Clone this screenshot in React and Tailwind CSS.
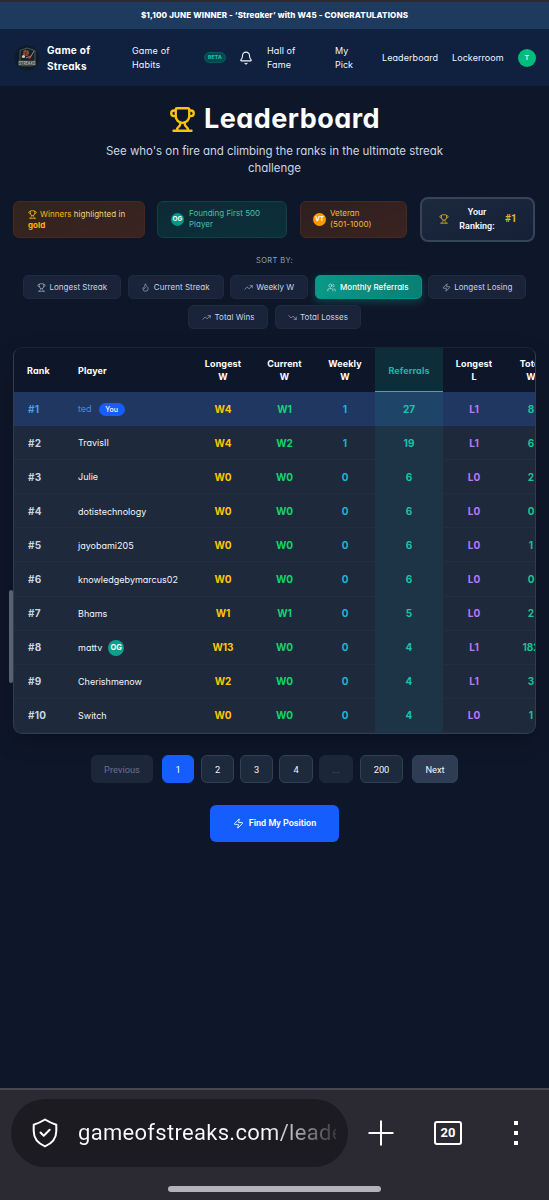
import React from "react";
import { Trophy, Flame, TrendingUp, TrendingDown, Users, Zap, Bell } from "lucide-react";

const players = [
  ["ted", "W4", "W1", 1, 27, "L1", "8"],
  ["TravisII", "W4", "W2", 1, 19, "L1", "6"],
  ["Julie", "W0", "W0", 0, 6, "L0", "2"],
  ["dotistechnology", "W0", "W0", 0, 6, "L0", "0"],
  ["jayobami205", "W0", "W0", 0, 6, "L0", "1"],
  ["knowledgebymarcus02", "W0", "W0", 0, 6, "L0", "0"],
  ["Bhams", "W1", "W1", 0, 5, "L0", "2"],
  ["mattv", "W13", "W0", 0, 4, "L1", "182"],
  ["Cherishmenow", "W2", "W0", 0, 4, "L1", "3"],
  ["Switch", "W0", "W0", 0, 4, "L0", "1"],
];

function Banner() {
  return (
    <div className="h-[29px] shrink-0 border-t-2 border-[#2b2a33] bg-[#1e3a5f] text-center text-[8px] leading-[27px] font-extrabold tracking-[0.14px] text-white">
      $1,100 JUNE WINNER - ‘Streaker’ with W45 - CONGRATULATIONS
    </div>
  );
}

function Logo() {
  return (
    <svg viewBox="0 0 26 26" className="size-[26px] shrink-0">
      <circle cx="13" cy="13" r="12.5" fill="#0e1c29" />
      <path d="M6 5.500 13 3l8 2.500v9l-3 5H9l-3-5z" fill="#14212a" stroke="#5d665f" strokeWidth=".8" />
      <circle cx="12" cy="8" r="3" fill="#9b4a2c" />
      <path d="m9 7 6 3M13 5l-2 6" stroke="#312a2a" strokeWidth=".6" />
      <circle cx="9.500" cy="11.500" r="1.600" fill="#c9cbc5" />
      <path d="m20 6-4 7M12 13l5-2" stroke="#8e9791" strokeWidth=".9" />
      <circle cx="15.500" cy="12.500" r="1.300" fill="#a8443d" />
      <path d="M4 15.500h18v5l-4 1H8l-4-1z" fill="#39413f" />
      <text x="13" y="20" textAnchor="middle" textLength="16.500" lengthAdjust="spacingAndGlyphs" fontSize="5" fontWeight="700" fill="#a9ada5" fontFamily="Inter">STREAKS</text>
    </svg>
  );
}

function Header() {
  return (
    <header className="flex h-[57px] shrink-0 items-center bg-[#10203f] pr-[13px] pl-[14px] text-[9px] leading-[14px] whitespace-nowrap text-slate-100">
      <Logo />
      <div className="ml-[7px] w-[85px] text-[10px] leading-4 font-bold tracking-[0.3px] text-white">Game of<br />Streaks</div>
      <div className="w-[72px] tracking-[0.15px]">Game of<br />Habits</div>
      <div className="h-[11px] w-[22px] rounded-full border border-teal-800 bg-[#0b464f] text-center text-[5px] leading-[9px] font-bold tracking-[0.3px] text-teal-400">BETA</div>
      <Bell className="ml-[13px] size-[14px]" strokeWidth={1.9} />
      <div className="ml-[14px] w-[68px] tracking-[0.1px]">Hall of<br />Fame</div>
      <div className="w-[47px]">My<br />Pick</div>
      <div className="w-[70px] tracking-[0.08px]">Leaderboard</div>
      <div className="tracking-[0.07px]">Lockerroom</div>
      <div className="ml-auto size-[18px] rounded-full bg-emerald-500 text-center font-['Roboto',sans-serif] text-[7px] leading-[18px] font-medium">T</div>
    </header>
  );
}

function Badge({ className, children }) {
  return (
    <span className={"inline-flex shrink-0 items-center justify-center rounded-full font-bold text-white " + className}>{children}</span>
  );
}

function Legend() {
  return (
    <div className="mt-[20px] flex h-[46px] w-[523px] shrink-0 items-center self-center text-[8px] leading-[11px] whitespace-nowrap">
      <div className="h-[37px] w-[132px] rounded-md border border-[#46291f] bg-linear-to-br from-[#30241f] to-[#3b2320] px-[14px] pt-[7px] text-amber-400">
        <div className="flex items-center gap-[3px]"><Trophy className="size-[9px]" /><span className="tracking-[0.04px]">Winners <span className="text-[#f5d479]">highlighted in</span></span></div>
        <div className="font-bold">gold</div>
      </div>
      <div className="ml-[12px] flex h-[37px] w-[130px] items-center rounded-md border border-[#10423f] bg-linear-to-br from-[#0d2a35] to-[#0b3039] pl-[13px] text-[#3cc4ab]">
        <Badge className="mr-[5px] size-[13px] bg-teal-600 text-[6.500px]">OG</Badge>
        <div>Founding First 500<br />Player</div>
      </div>
      <div className="ml-[13px] flex h-[37px] w-[107px] items-center rounded-md border border-[#46291f] bg-linear-to-br from-[#2c201f] to-[#3b2320] pl-[12px] text-[#f0bd3c]">
        <Badge className="mr-[4px] size-[13px] bg-amber-500 text-[6.500px]">VT</Badge>
        <div>Veteran<br /><span className="tracking-[0.05px]">(501-1000)</span></div>
      </div>
      <div className="ml-[13px] flex h-[45px] w-[115px] items-center rounded-lg border-2 border-[#36445b] bg-linear-to-br from-slate-800 to-[#152037] pl-[17px] font-['Roboto',sans-serif] text-[9px] leading-[14px] font-semibold text-slate-50">
        <Trophy className="size-[10px] text-[#cba126]" strokeWidth={2.2} />
        <div className="mr-[10px] ml-[10px] w-[36px] text-center">Your<br />Ranking:</div>
        <span className="text-[10px] font-bold text-[#e6b52b]">#1</span>
      </div>
    </div>
  );
}

const sorts = [
  [Trophy, "Longest Streak", "w-[98px]"],
  [Flame, "Current Streak", "w-[96px]"],
  [TrendingUp, "Weekly W", "w-[78px]"],
  [Users, "Monthly Referrals", "w-[107px]"],
  [Zap, "Longest Losing", "w-[98px]"],
  [TrendingUp, "Total Wins", "w-[80px]"],
  [TrendingDown, "Total Losses", "w-[86px]"],
];

function SortBar() {
  return (
    <>
      <div className="mt-[13px] h-[12px] shrink-0 text-center text-[7.500px] leading-[12px] tracking-[0.35px] text-slate-400">SORT BY:</div>
      <div className="mt-[8px] flex shrink-0 flex-wrap justify-center gap-x-[6.500px] gap-y-[6px] px-3">
        {sorts.map(([Icon, label, width], i) => (
          <button
            key={label}
            className={
              "flex h-6 items-center justify-center gap-[3.500px] rounded-[5px] border text-[8px] tracking-[0.03px] whitespace-nowrap " + width +
              (i === 3
                ? " border-teal-600 bg-linear-to-r from-[#0b9986] to-[#087f75] font-medium text-white shadow-[0_3px_8px_rgba(13,148,136,0.35)]"
                : " border-[#1e2a3e] bg-[#19243a] text-slate-300")
            }
          >
            <Icon className="size-[9px] shrink-0 opacity-80" strokeWidth={1.8} />
            <span>{label}</span>
          </button>
        ))}
      </div>
    </>
  );
}

function Board() {
  return (
    <div className="mt-[18px] h-[387px] w-[523px] shrink-0 self-center overflow-hidden rounded-[9px] border border-[#303d50] border-t-[#18253a] bg-[#1e293b] shadow-[0_8px_20px_rgba(3,7,18,0.3)]">
      <table className="h-[385px] w-[543px] table-fixed border-collapse text-center text-[10px] font-bold">
        <colgroup>
          <col className="w-[50px]" />
          <col className="w-[128px]" />
          <col className="w-[62px]" />
          <col className="w-[61px]" />
          <col className="w-[60px]" />
          <col className="w-[68px]" />
          <col className="w-[62px]" />
          <col className="w-[52px]" />
        </colgroup>
        <thead>
          <tr className="h-11 bg-[#0e172a] text-[9px] leading-[13px] tracking-[0.1px] text-white">
            <th className="pl-[13px] text-left">Rank</th>
            <th className="pl-[14px] text-left">Player</th>
            <th>Longest<br />W</th>
            <th>Current<br />W</th>
            <th>Weekly<br />W</th>
            <th className="bg-[#0e2d3b] text-[#14b8a6] shadow-[inset_0_-1px_0_#20b8a8]">Referrals</th>
            <th>Longest<br />L</th>
            <th>Total<br />W</th>
          </tr>
        </thead>
        <tbody>
          {players.map(([name, longest, current, weekly, referrals, loss, total], i) => (
            <tr key={name} className={"h-[34.100px] " + (i === 0 ? "bg-[#203861]" : "shadow-[inset_0_-1px_0_#222f43]")}>
              <td className={"p-0 pl-[14px] text-left tracking-[0.25px] " + (i === 0 ? "text-[#4f9bf4]" : "text-slate-300")}>#{i + 1}</td>
              <td className={"p-0 pl-[14px] text-left text-[9px] font-normal " + (i === 0 ? "text-[#4a88d8]" : "text-slate-100")}>
                <div className="flex items-center">
                  {name}
                  {i === 0 && <span className="ml-[7px] h-[13px] w-[26px] rounded-full bg-[#155dfc] text-center text-[7px] leading-[13px] font-medium text-white">You</span>}
                  {i === 7 && <Badge className="ml-[6px] size-4 bg-[#0d9f8c] text-[7.500px]">OG</Badge>}
                </div>
              </td>
              <td className="p-0 text-[#fcc800]">{longest}</td>
              <td className="p-0 text-[#14d66c]">{current}</td>
              <td className="p-0 text-[#18b6dc]">{weekly}</td>
              <td className={"p-0 text-[#17c5ac] " + (i === 0 ? "bg-[#1e4568]" : "bg-[#1c3445]")}>{referrals}</td>
              <td className="p-0 text-[#b878f7]">{loss}</td>
              <td className="p-0 text-[#16c493]">{total}</td>
            </tr>
          ))}
        </tbody>
      </table>
    </div>
  );
}

const pages = [
  ["1", "w-8 border-[#155dfc] bg-[#155dfc] text-white ml-[9px]"],
  ["2", "w-[33px] border-[#334054] bg-slate-800 text-slate-100 ml-[7px]"],
  ["3", "w-[33px] border-[#334054] bg-slate-800 text-slate-100 ml-[6px]"],
  ["4", "w-[34px] border-[#334054] bg-slate-800 text-slate-100 ml-[6px]"],
  ["...", "w-[34px] border-[#1b2639] bg-[#1b2639] text-slate-500 ml-[6px]"],
  ["200", "w-[43px] border-[#334054] bg-slate-800 text-slate-100 ml-[7px]"],
  ["Next", "w-[46px] border-slate-700 bg-[#2f3d54] text-slate-100 ml-[9px]"],
];

function Pagination() {
  return (
    <nav className="mt-[21px] flex h-7 shrink-0 justify-center font-['Roboto',sans-serif] text-[9.300px]">
      <button className="w-[62px] rounded-[6px] bg-[#1c273a] pt-[2px] text-slate-500">Previous</button>
      {pages.map(([label, style]) => (
        <button key={label} className={"rounded-[6px] border pt-[2px] " + style}>{label}</button>
      ))}
    </nav>
  );
}

function BrowserBar() {
  return (
    <footer className="flex h-[112px] shrink-0 flex-col border-t-2 border-[#474652] bg-[#2b2a33]">
      <div className="mt-[9px] flex h-[68px] items-center">
        <div className="ml-[11px] flex h-[68px] w-[337px] shrink-0 items-center rounded-full bg-[#1c1b22] pl-[21px]">
          <svg viewBox="0 0 26 30" className="h-[30px] w-[26px] shrink-0 fill-none stroke-white stroke-2" strokeLinecap="round" strokeLinejoin="round">
            <path d="M13 1.500c4 2.500 7.500 4 11.300 5.200v6.400c0 7-4.600 12.500-11.300 15.300C6.300 25.600 1.700 20.100 1.700 13.100V6.700C5.500 5.500 9 4 13 1.500Z" />
            <path d="m8.500 14.500 3.200 3.200 6-6" />
          </svg>
          <div className="ml-[20px] w-[258px] overflow-hidden bg-linear-to-r from-[#fbfbfe] from-74% to-[#fbfbfe20] bg-clip-text font-['Roboto',sans-serif] text-[22px] leading-8 tracking-[0.300px] whitespace-nowrap text-transparent">gameofstreaks.com/leade</div>
        </div>
        <svg viewBox="0 0 26 26" className="ml-[20px] size-[26px] stroke-white stroke-2"><path d="M13 .5v25M.5 13h25" /></svg>
        <div className="ml-[40px] h-[24px] w-[28px] rounded-[3px] border-2 border-white text-center font-['Roboto',sans-serif] text-[13px] leading-5 font-bold text-white">20</div>
        <div className="ml-[52px] flex flex-col gap-[6px]">
          <i className="size-1 bg-white" /><i className="size-1 bg-white" /><i className="size-1 bg-white" />
        </div>
      </div>
      <div className="mt-[19px] h-[6px] w-[213px] self-center rounded-full bg-[#b3b2b7]" />
    </footer>
  );
}

export default function App() {
  return (
    <div className="relative flex h-[1200px] w-[549px] flex-col overflow-hidden bg-[#0e1729] font-['Inter',sans-serif] [font-feature-settings:'cv11']">
      <Banner />
      <Header />
      <div className="mt-[17px] flex h-8 shrink-0 items-center justify-center">
        <Trophy className="mr-[8px] size-[27px] text-[#fcc20b]" strokeWidth={2.1} />
        <h1 className="text-[27px] leading-8 font-bold tracking-[0.45px] text-white">Leaderboard</h1>
      </div>
      <p className="mt-[8px] shrink-0 text-center text-[11.500px] leading-[16.500px] tracking-[-0.04px] text-slate-300">
        See who's on fire and climbing the ranks in the ultimate streak<br />challenge
      </p>
      <Legend />
      <SortBar />
      <Board />
      <Pagination />
      <button className="mt-[22px] flex h-[37px] w-[129px] shrink-0 items-center justify-center gap-[5px] self-center rounded-md bg-[#155dfc] font-['Roboto',sans-serif] text-[9px] font-semibold text-white">
        <Zap className="size-[11px]" />Find My Position
      </button>
      <div className="grow" />
      <BrowserBar />
      <div className="absolute top-[590px] left-[9px] h-[93px] w-[4px] rounded-full bg-[#596070]" />
    </div>
  );
}
